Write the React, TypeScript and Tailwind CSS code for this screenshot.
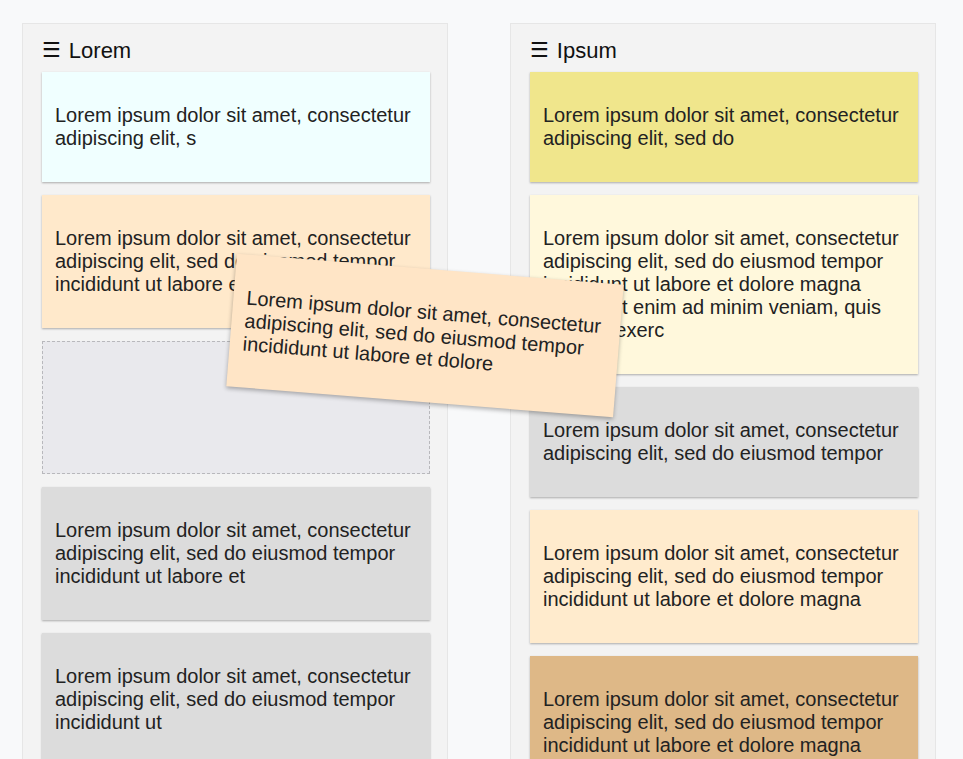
import React from "react";

type Card = { text: string; bg: string };

const L1 = "Lorem ipsum dolor sit amet, consectetur adipiscing elit, s";

const col1: (Card | null)[] = [
  { text: L1, bg: "bg-[#f0ffff]" },
  {
    text: "Lorem ipsum dolor sit amet, consectetur adipiscing elit, sed do eiusmod tempor incididunt ut labore et dolore",
    bg: "bg-[#ffe9cb]",
  },
  null,
  {
    text: "Lorem ipsum dolor sit amet, consectetur adipiscing elit, sed do eiusmod tempor incididunt ut labore et",
    bg: "bg-[#dcdcdc]",
  },
  {
    text: "Lorem ipsum dolor sit amet, consectetur adipiscing elit, sed do eiusmod tempor incididunt ut",
    bg: "bg-[#dcdcdc]",
  },
];

const col2: Card[] = [
  { text: "Lorem ipsum dolor sit amet, consectetur adipiscing elit, sed do", bg: "bg-[#f0e68c]" },
  {
    text: "Lorem ipsum dolor sit amet, consectetur adipiscing elit, sed do eiusmod tempor incididunt ut labore et dolore magna aliqua. Ut enim ad minim veniam, quis nostrud exerc",
    bg: "bg-[#fff8dc]",
  },
  { text: "Lorem ipsum dolor sit amet, consectetur adipiscing elit, sed do eiusmod tempor", bg: "bg-[#dcdcdc]" },
  {
    text: "Lorem ipsum dolor sit amet, consectetur adipiscing elit, sed do eiusmod tempor incididunt ut labore et dolore magna",
    bg: "bg-[#ffebcd]",
  },
  {
    text: "Lorem ipsum dolor sit amet, consectetur adipiscing elit, sed do eiusmod tempor incididunt ut labore et dolore magna",
    bg: "bg-[#deb887]",
  },
];

function CardView({ card }: { card: Card }) {
  return (
    <div className={`${card.bg} mb-[13px] px-[13px] py-[12px] shadow-[0_1px_2px_rgba(0,0,0,0.3)]`}>
      <p className="my-[20px] text-[20px] leading-[23px] text-[#222]">{card.text}</p>
    </div>
  );
}

function Column({ title, cards }: { title: string; cards: (Card | null)[] }) {
  return (
    <div className="w-[426px] shrink-0 border border-[#e6e6e6] bg-[#f3f3f3] pl-[19px] pr-[17px]">
      <div className="flex items-center gap-[8px] pt-[14px] pb-[9px] text-[22px] leading-[25px] text-[#111]">
        <span className="font-['DejaVu_Sans',sans-serif] text-[21px]">☰</span>
        <span>{title}</span>
      </div>
      {cards.map((c, i) =>
        c ? (
          <CardView key={i} card={c} />
        ) : (
          <div key={i} className="mb-[13px] h-[133px] border border-dashed border-[#b8b8bc] bg-[#e9e9ed]" />
        ),
      )}
    </div>
  );
}

export default function App() {
  return (
    <div className="relative min-h-[759px] bg-[#f8f9fa] font-['Liberation_Sans',Arial,sans-serif]">
      <div className="flex gap-[62px] pl-[22px] pt-[23px]">
        <Column title="Lorem" cards={col1} />
        <Column title="Ipsum" cards={col2} />
      </div>
      <div className="absolute left-[231px] top-[269px] w-[388px] rotate-[4.6deg] bg-[#ffe5c6] px-[13px] py-[12px] shadow-[0_2px_4px_rgba(0,0,0,0.3)]">
        <p className="my-[20px] text-[20px] leading-[23px] text-[#222]">
          Lorem ipsum dolor sit amet, consectetur adipiscing elit, sed do eiusmod tempor incididunt ut labore et dolore
        </p>
      </div>
    </div>
  );
}
